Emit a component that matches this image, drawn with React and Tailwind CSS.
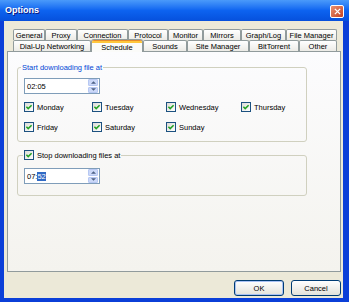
const ROW1 = [
  ['General', 'w-[32px]'],
  ['Proxy', 'w-[32px]'],
  ['Connection', 'w-[51px]'],
  ['Protocol', 'w-[40px]'],
  ['Monitor', 'w-[35px]'],
  ['Mirrors', 'w-[38px]'],
  ['Graph/Log', 'w-[45px]'],
  ['File Manager', 'w-[51px]'],
]

const ROW2 = [
  ['Dial-Up Networking', 'w-[78px]'],
  ['Schedule', 'w-[52px]', true],
  ['Sounds', 'w-[44px]'],
  ['Site Manager', 'w-[62px]'],
  ['BitTorrent', 'w-[50px]'],
  ['Other', 'w-[38px]'],
]

function Tab({ label, width, active }) {
  if (active) {
    return (
      <div className={`${width} relative z-10 -mb-[1px] flex h-[13px] flex-col overflow-hidden rounded-t-[3px] border border-b-0 border-[#919B9C] bg-[#FBFBF9]`}>
        <div className="h-[1px] bg-[#E68B2C]" />
        <div className="h-[2px] bg-[#FFC73C]" />
        <div className="flex flex-1 items-center justify-center">{label}</div>
      </div>
    )
  }
  return (
    <div className={`${width} flex h-[11px] items-center justify-center rounded-t-[2px] border border-b-0 border-[#919B9C] bg-linear-to-b from-white to-[#ECEBE6]`}>
      {label}
    </div>
  )
}

function Check({ label }) {
  return (
    <div className="flex h-[12px] items-center gap-[3px]">
      <span className="flex h-[10px] w-[10px] items-center justify-center border border-[#1C5180] bg-linear-to-br from-[#DCDCD7] to-white">
        <svg viewBox="0 0 8 8" className="h-[8px] w-[8px]">
          <path d="M1.4 3.8 L3.2 5.6 L6.6 2.2" fill="none" stroke="#21A121" strokeWidth="1.5" />
        </svg>
      </span>
      <span>{label}</span>
    </div>
  )
}

function Spinner() {
  return (
    <div className="ml-auto mr-[1px] flex h-[14px] w-[10px] flex-col gap-[1px]">
      <div className="flex flex-1 items-center justify-center rounded-[1px] border border-[#B7C8F3] bg-[#CBD8F8]">
        <svg viewBox="0 0 6 3" className="h-[3px] w-[5px]">
          <path d="M0 3 L3 0 L6 3Z" fill="#4D6185" />
        </svg>
      </div>
      <div className="flex flex-1 items-center justify-center rounded-[1px] border border-[#B7C8F3] bg-[#CBD8F8]">
        <svg viewBox="0 0 6 3" className="h-[3px] w-[5px]">
          <path d="M0 0 L3 3 L6 0Z" fill="#4D6185" />
        </svg>
      </div>
    </div>
  )
}

function TimeBox({ children }) {
  return (
    <div className="flex h-[16px] w-[76px] items-center border border-[#7F9DB9] bg-white pl-[2px]">
      <span className="flex items-center">{children}</span>
      <Spinner />
    </div>
  )
}

function Button({ label, primary }) {
  return (
    <div className={`flex h-[16px] w-[50px] items-center justify-center rounded-[3px] border border-[#003C74] bg-linear-to-b from-white to-[#E3E2DA] ${primary ? 'shadow-[inset_0_0_0_1px_#A9C2F5]' : ''}`}>
      {label}
    </div>
  )
}

export default function App() {
  return (
    <div className="flex h-[302px] w-[349px] flex-col bg-[#0B3FD8] font-['Liberation_Sans',Arial,sans-serif] text-[7.5px] leading-[9px] text-black">
      {/* Title bar */}
      <div className="flex h-[21px] items-center bg-linear-to-b from-[#4A9AFA] via-[#0D63F0] to-[#0650DC] pl-[5px] pr-[5px]">
        <span className="text-[9px] font-bold text-white [text-shadow:1px_1px_#0A1883]">Options</span>
        <div className="ml-auto mt-[2px] flex h-[13px] w-[14px] items-center justify-center rounded-[2px] border border-white bg-linear-to-br from-[#E9906F] to-[#C4401F]">
          <svg viewBox="0 0 8 8" className="h-[7px] w-[7px]">
            <path d="M1 1 L7 7 M7 1 L1 7" stroke="white" strokeWidth="1.6" />
          </svg>
        </div>
      </div>

      {/* Body */}
      <div className="mb-[4px] ml-[4px] mr-[6px] flex flex-1 flex-col bg-[#ECE9D8]">
        <div className="ml-[9px] mt-[8px] flex">
          {ROW1.map(([l, w]) => (
            <Tab key={l} label={l} width={w} />
          ))}
        </div>
        <div className="ml-[9px] flex h-[11px] items-end">
          {ROW2.map(([l, w, a]) => (
            <Tab key={l} label={l} width={w} active={a} />
          ))}
        </div>

        {/* Tab panel */}
        <div className="ml-[3px] flex h-[221px] w-[334px] flex-col border border-[#919B9C] bg-linear-to-b from-[#FCFCFE] to-[#F4F3EE] pt-[11px]">
          <fieldset className="ml-[9px] w-[290px] rounded-[3px] border border-[#D0D0BF] pb-[8px] pl-[6px]">
            <legend className="-ml-[3px] px-[1px] text-[#0046D5]">Start downloading file at</legend>
            <div className="mt-[6px]">
              <TimeBox>02:05</TimeBox>
            </div>
            <div className="mt-[7px] grid grid-cols-[68px_74px_75px_auto] gap-y-[8px]">
              <Check label="Monday" />
              <Check label="Tuesday" />
              <Check label="Wednesday" />
              <Check label="Thursday" />
              <Check label="Friday" />
              <Check label="Saturday" />
              <Check label="Sunday" />
            </div>
          </fieldset>

          <fieldset className="ml-[9px] mt-[7px] w-[290px] rounded-[3px] border border-[#D0D0BF] pb-[11px] pl-[6px]">
            <legend className="-ml-[1px] px-[1px]">
              <Check label="Stop downloading files at" />
            </legend>
            <div className="mt-[7px]">
              <TimeBox>
                07:<span className="bg-[#316AC5] text-white">52</span>
              </TimeBox>
            </div>
          </fieldset>
        </div>

        {/* Buttons */}
        <div className="mr-[2px] mt-[8px] flex justify-end gap-[7px]">
          <Button label="OK" primary />
          <Button label="Cancel" />
        </div>
      </div>
    </div>
  )
}
